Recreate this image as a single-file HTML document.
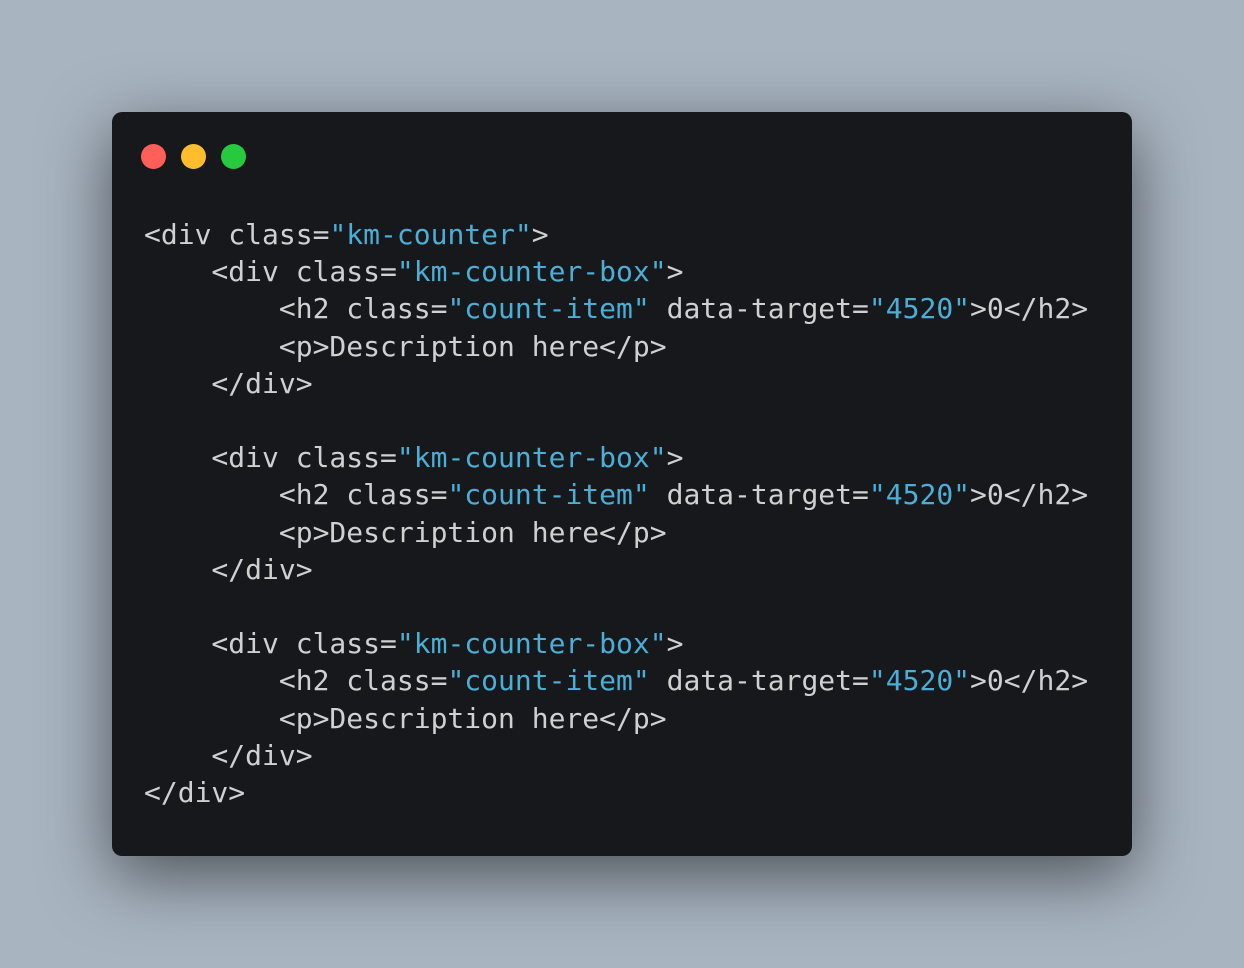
<!DOCTYPE html>
<html><head><style>
html,body{margin:0;padding:0;}
body{width:1244px;height:968px;background:#a8b4c0;position:relative;overflow:hidden;}
.win{position:absolute;left:112px;top:112px;width:1020px;height:744px;background:#17181b;border-radius:10px;box-shadow:0 20px 68px rgba(0,0,0,0.55);}
.dot{position:absolute;top:32px;width:25px;height:25px;border-radius:50%;}
pre{position:absolute;left:32px;top:104px;margin:0;font-family:"DejaVu Sans Mono","Liberation Mono",monospace;font-size:28px;line-height:37.2px;color:#d0d0d0;}
.s{color:#4aaed6;}
</style></head><body>
<div class="win">
<div class="dot" style="left:29px;background:#ff5f56"></div>
<div class="dot" style="left:69px;background:#ffbd2e"></div>
<div class="dot" style="left:109px;background:#27c93f"></div>
<pre>&lt;div class=<span class="s">"km-counter"</span>&gt;
    &lt;div class=<span class="s">"km-counter-box"</span>&gt;
        &lt;h2 class=<span class="s">"count-item"</span> data-target=<span class="s">"4520"</span>&gt;0&lt;/h2&gt;
        &lt;p&gt;Description here&lt;/p&gt;
    &lt;/div&gt;

    &lt;div class=<span class="s">"km-counter-box"</span>&gt;
        &lt;h2 class=<span class="s">"count-item"</span> data-target=<span class="s">"4520"</span>&gt;0&lt;/h2&gt;
        &lt;p&gt;Description here&lt;/p&gt;
    &lt;/div&gt;

    &lt;div class=<span class="s">"km-counter-box"</span>&gt;
        &lt;h2 class=<span class="s">"count-item"</span> data-target=<span class="s">"4520"</span>&gt;0&lt;/h2&gt;
        &lt;p&gt;Description here&lt;/p&gt;
    &lt;/div&gt;
&lt;/div&gt;</pre>
</div>
</body></html>
